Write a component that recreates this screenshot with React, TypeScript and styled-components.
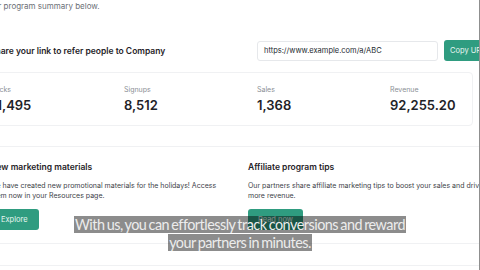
import styled, { createGlobalStyle } from "styled-components";

const GlobalStyle = createGlobalStyle`
  html, body {
    margin: 0;
    padding: 0;
    background: #ffffff;
    overflow: hidden;
  }
  body {
    width: 480px;
    height: 270px;
    font-family: Inter, "Liberation Sans", sans-serif;
    color: #1f2328;
  }
`;

const Viewport = styled.div`
  position: relative;
  width: 480px;
  height: 270px;
  overflow: hidden;
`;

const Page = styled.div`
  width: 560px;
  margin-left: -26px;
  padding: 0 0 0 16px;
  box-sizing: border-box;
  display: flex;
  flex-direction: column;
`;

const Intro = styled.p`
  margin: 1px 0 0 -6px;
  font-size: 8px;
  line-height: 10px;
  color: #6b6f76;
`;

const ShareRow = styled.div`
  display: flex;
  align-items: center;
  margin-top: 29px;
`;

const SectionTitle = styled.h2`
  flex: 0 0 267px;
  margin: 0;
  font-size: 8.5px;
  font-weight: 600;
  color: #1f2328;
`;

const LinkInput = styled.div`
  width: 181px;
  height: 20px;
  box-sizing: border-box;
  border: 1px solid #e6e8eb;
  border-radius: 3px;
  padding: 0 6px;
  margin-right: 6px;
  display: flex;
  align-items: center;
  font-size: 7.5px;
  color: #24292f;
`;

const Button = styled.div<{ $pad?: number }>`
  height: 21px;
  box-sizing: border-box;
  padding: 0 ${(p) => p.$pad ?? 10}px;
  border-radius: 3px;
  background: #2f9c80;
  color: #e9f6f1;
  font-size: 7.5px;
  display: inline-flex;
  align-items: center;
  white-space: nowrap;
`;

const StatsCard = styled.div`
  margin: 11px 0 0 -16px;
  width: 499px;
  height: 54px;
  box-sizing: border-box;
  border: 1px solid #f0f1f3;
  border-radius: 4px;
  padding: 0 16px;
  display: grid;
  grid-template-columns: repeat(4, 133px);
  align-items: center;
`;

const Stat = styled.div`
  display: flex;
  flex-direction: column;
  gap: 4px;
`;

const StatLabel = styled.span`
  font-size: 7px;
  line-height: 8px;
  color: #8b8f96;
`;

const StatValue = styled.span`
  font-size: 13px;
  line-height: 14px;
  font-weight: 600;
  color: #1f2328;
`;

const CardGrid = styled.div`
  margin: 20px 0 0 -16px;
  display: grid;
  grid-template-columns: 258px 270px;
`;

const InfoCard = styled.div`
  height: 98px;
  box-sizing: border-box;
  border-top: 1px solid #f0f1f3;
  border-bottom: 1px solid #f0f1f3;
  padding: 15px 6px 0 16px;
  display: flex;
  flex-direction: column;
  align-items: flex-start;
`;

const CardTitle = styled.h3`
  margin: 0;
  font-size: 8.5px;
  line-height: 10px;
  font-weight: 600;
  color: #1f2328;
`;

const CardText = styled.p`
  margin: 9px 0 8px;
  font-size: 7px;
  line-height: 10px;
  color: #3d4248;
`;

const NextCard = styled.div`
  margin: 21px 0 0 -16px;
  height: 40px;
  border-top: 1px solid #f0f1f3;
`;

const EdgeLine = styled.div`
  position: absolute;
  top: 0;
  right: 0;
  width: 1px;
  height: 270px;
  background: #8f8f8f;
`;

const Caption = styled.div`
  position: absolute;
  left: 0;
  right: 0;
  top: 216px;
  text-align: center;
  font-family: Lato, "Open Sans", sans-serif;
  font-size: 14.4px;
  line-height: 17.5px;
  letter-spacing: -0.5px;
  word-spacing: -1px;
`;

const CaptionLine = styled.span`
  background: rgba(0, 0, 0, 0.45);
  color: #ececec;
  padding: 0 1px;
  box-decoration-break: clone;
  -webkit-box-decoration-break: clone;
`;

export default function App() {
  return (
    <Viewport>
      <GlobalStyle />
      <Page>
        <Intro>Your program summary below.</Intro>
        <ShareRow>
          <SectionTitle>Share your link to refer people to Company</SectionTitle>
          <LinkInput>https://www.example.com/a/ABC</LinkInput>
          <Button $pad={6}>Copy URL</Button>
        </ShareRow>
        <StatsCard>
          <Stat>
            <StatLabel>Clicks</StatLabel>
            <StatValue>11,495</StatValue>
          </Stat>
          <Stat>
            <StatLabel>Signups</StatLabel>
            <StatValue>8,512</StatValue>
          </Stat>
          <Stat>
            <StatLabel>Sales</StatLabel>
            <StatValue>1,368</StatValue>
          </Stat>
          <Stat>
            <StatLabel>Revenue</StatLabel>
            <StatValue>92,255.20</StatValue>
          </Stat>
        </StatsCard>
        <CardGrid>
          <InfoCard>
            <CardTitle>New marketing materials</CardTitle>
            <CardText>
              We have created new promotional materials for the holidays! Access
              them now in your Resources page.
            </CardText>
            <Button $pad={11}>Explore</Button>
          </InfoCard>
          <InfoCard>
            <CardTitle>Affiliate program tips</CardTitle>
            <CardText>
              Our partners share affiliate marketing tips to boost your sales and
              drive more revenue.
            </CardText>
            <Button $pad={10}>Read now</Button>
          </InfoCard>
        </CardGrid>
        <NextCard />
      </Page>
      <Caption>
        <CaptionLine>
          With us, you can effortlessly track conversions and reward
          <br />
          your partners in minutes.
        </CaptionLine>
      </Caption>
      <EdgeLine />
    </Viewport>
  );
}
